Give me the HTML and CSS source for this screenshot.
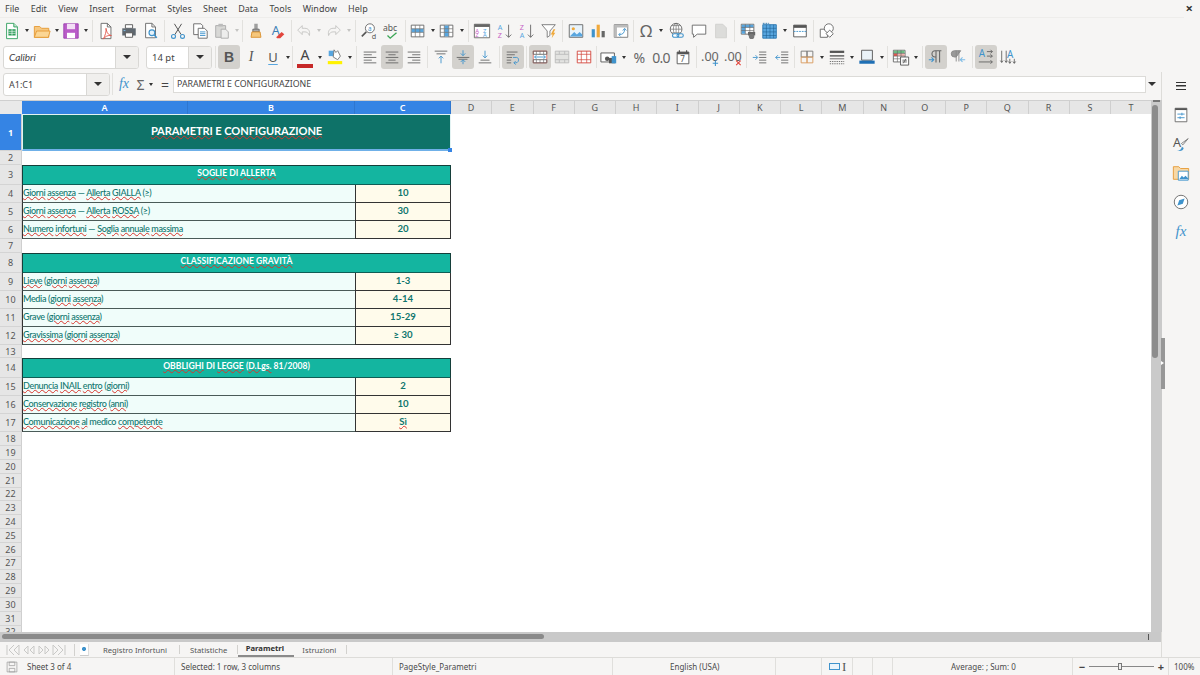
FILE: index.html
```html
<!DOCTYPE html>
<html lang="it">
<head>
<meta charset="utf-8">
<title>Parametri</title>
<link rel="stylesheet" href="styles.css">
</head>
<body>
<svg class="defs" aria-hidden="true">
<symbol id="new" viewBox="0 0 20 20"><path d="M4 1.500h8l4 4v13H4z" fill="#fff" stroke="#2e9e5b"/><path d="M6 8h8v7H6z" fill="#2e9e5b"/><path d="M6 10.300h8M6 12.600h8M10 8v7" stroke="#fff" stroke-width=".7"/><path d="M12 1.500v4h4" fill="#bfe6cc" stroke="#2e9e5b"/></symbol>
<symbol id="open" viewBox="0 0 20 20"><path d="M1.500 5h6l2 2h8v10h-16z" fill="#f6c77f" stroke="#e59a34"/><path d="M1.500 17l2.500-7h15l-2 7z" fill="#fbd694" stroke="#e59a34"/></symbol>
<symbol id="save" viewBox="0 0 20 20"><path d="M2 2h16v16H2z" fill="#b95cc8" stroke="#9c3fb0"/><path d="M5.500 2h9v6h-9z" fill="#f3dff6"/><path d="M5.500 12h9v6h-9z" fill="#fff"/></symbol>
<symbol id="pdf" viewBox="0 0 20 20"><path d="M4.500 1.500h7l4 4v13h-11z" fill="#fff" stroke="#666"/><path d="M11.500 1.500v4h4" fill="none" stroke="#666"/><path d="M10 7c1 5 2 7 6 8-4-.5-7 1-9 4 2-4 3.500-8 3-12z" fill="none" stroke="#e2574c"/></symbol>
<symbol id="print" viewBox="0 0 20 20"><path d="M6 3h8v4H6z" fill="#fff" stroke="#555"/><path d="M2.500 7h15v8h-15z" fill="#5f6870"/><path d="M6 12h8v5H6z" fill="#fff" stroke="#555"/><path d="M4 9.500h2" stroke="#7fc4f0"/></symbol>
<symbol id="preview" viewBox="0 0 20 20"><path d="M4 1.500h7l4 4v12H4z" fill="#fff" stroke="#666"/><path d="M11 1.500v4h4" fill="none" stroke="#666"/><circle cx="11" cy="12" r="3.200" fill="#e6f3fb" stroke="#3f93cc" stroke-width="1.300"/><path d="M13.500 14.500l3 3" stroke="#3f93cc" stroke-width="1.600"/></symbol>
<symbol id="cut" viewBox="0 0 20 20"><path d="M6 2l7.500 12M14 2L6.500 14" stroke="#555" stroke-width="1.100" fill="none"/><circle cx="5" cy="16" r="2.200" fill="none" stroke="#3f93cc" stroke-width="1.200"/><circle cx="15" cy="16" r="2.200" fill="none" stroke="#3f93cc" stroke-width="1.200"/></symbol>
<symbol id="copy" viewBox="0 0 20 20"><path d="M3 2h8l2 2v10H3z" fill="#fff" stroke="#666"/><path d="M8 7h7l3 3v8H8z" fill="#fff" stroke="#666"/><path d="M10 11h6M10 13h6M10 15h6" stroke="#3f93cc"/></symbol>
<symbol id="paste" viewBox="0 0 20 20"><path d="M3 4h11v13H3z" fill="#d8d8d6" stroke="#aaa"/><path d="M6 2h5v3H6z" fill="#bbb"/><path d="M9 8h5l3 3v7H9z" fill="#ededec" stroke="#aaa"/></symbol>
<symbol id="clone" viewBox="0 0 20 20"><path d="M11 2v6M9 2v6" stroke="#777" stroke-width="1.300"/><path d="M6.500 8h7v3h-7z" fill="#aaa" stroke="#666"/><path d="M5.500 11h9l1 6h-11z" fill="#f5c77d" stroke="#d98f2b"/></symbol>
<symbol id="clear" viewBox="0 0 20 20"><text x="3" y="14" class="svgt" font-size="14" fill="#3d7fb5">A</text><path d="M8 17l6-6 3 2.500-4.500 4.500H9z" fill="#e2453c"/></symbol>
<symbol id="undo" viewBox="0 0 20 20"><path d="M3 9l5-5v3h3c4 0 6 3 5 8-1-3-3-4-5-4H8v3z" fill="none" stroke="#c4c4c2" stroke-linejoin="round"/></symbol>
<symbol id="redo" viewBox="0 0 20 20"><path d="M17 9l-5-5v3H9c-4 0-6 3-5 8 1-3 3-4 5-4h3v3z" fill="none" stroke="#c4c4c2" stroke-linejoin="round"/></symbol>
<symbol id="find" viewBox="0 0 20 20"><circle cx="11" cy="7" r="5" fill="#fff" stroke="#666"/><path d="M7 11l-5 5" stroke="#555" stroke-width="1.800"/><text x="9" y="9.500" class="svgt" font-size="7" fill="#3f93cc">a</text><text x="13" y="19" class="svgt" font-size="8" fill="#555">d</text></symbol>
<symbol id="spell" viewBox="0 0 20 20"><text x="0" y="10" class="svgt" font-size="9.500" fill="#555">abc</text><path d="M5 15l3 3 7-6" fill="none" stroke="#3aa655" stroke-width="1.500"/></symbol>
<symbol id="rows" viewBox="0 0 20 20"><path d="M2.500 3.500h14v13h-14z" fill="#fff" stroke="#666"/><path d="M3 7.500h13v4H3z" fill="#58a6df"/><path d="M2.500 7.500h14M2.500 11.500h14M7 3.500v13M12 3.500v13" stroke="#777" stroke-width=".8"/></symbol>
<symbol id="cols" viewBox="0 0 20 20"><path d="M2.500 3.500h14v13h-14z" fill="#fff" stroke="#666"/><path d="M7 4h5v12H7z" fill="#58a6df"/><path d="M2.500 7.500h14M2.500 11.500h14M7 3.500v13M12 3.500v13" stroke="#777" stroke-width=".8"/></symbol>
<symbol id="sort" viewBox="0 0 20 20"><path d="M1.500 2.500h17v15h-17z" fill="#fff" stroke="#666"/><path d="M1.500 2.500h17v3h-17z" fill="#666"/><text x="2.500" y="12" class="svgt" font-size="6.500" fill="#c662c6">A</text><text x="2.500" y="17" class="svgt" font-size="6.500" fill="#c662c6">Z</text><text x="11" y="12" class="svgt" font-size="6.500" fill="#58a6df">Z</text><text x="11" y="17" class="svgt" font-size="6.500" fill="#58a6df">A</text></symbol>
<symbol id="asc" viewBox="0 0 20 20"><text x="2" y="9" class="svgt" font-size="8" fill="#58a6df">A</text><text x="2" y="18" class="svgt" font-size="8" fill="#c662c6">Z</text><path d="M14 3v14M11 14l3 3 3-3" fill="none" stroke="#666"/></symbol>
<symbol id="desc" viewBox="0 0 20 20"><text x="2" y="9" class="svgt" font-size="8" fill="#c662c6">Z</text><text x="2" y="18" class="svgt" font-size="8" fill="#58a6df">A</text><path d="M14 3v14M11 14l3 3 3-3" fill="none" stroke="#666"/></symbol>
<symbol id="filter" viewBox="0 0 20 20"><path d="M2 3h15l-6 7v5l-3 2v-7z" fill="#fff" stroke="#777"/><path d="M15 8l-3 6h2l-1 4 4-6h-2l2-4z" fill="#f0a93b"/></symbol>
<symbol id="image" viewBox="0 0 20 20"><path d="M2.500 3h15v14h-15z" fill="#e8f3fb" stroke="#666"/><circle cx="7" cy="7.500" r="1.800" fill="#f0a93b"/><path d="M3 16l5-5 3 3 3-3 3 3v2H3z" fill="#58a6df"/></symbol>
<symbol id="chart" viewBox="0 0 20 20"><path d="M3 8h3.500v9H3z" fill="#3f93cc"/><path d="M8.500 3H12v14H8.500z" fill="#f0a93b"/><path d="M14 10h3.500v7H14z" fill="#666"/></symbol>
<symbol id="pivot" viewBox="0 0 20 20"><path d="M2.500 3h15v14h-15z" fill="#fff" stroke="#777"/><path d="M2.500 3h15v3h-15zM2.500 3h3v14h-3z" fill="#bbb"/><path d="M8 14c4 0 6-2 6-6M12 9.500L14 7l2 2.500M9.500 12L7.500 14l2 2" fill="none" stroke="#3f93cc"/></symbol>
<symbol id="link" viewBox="0 0 20 20"><circle cx="9" cy="8" r="6.500" fill="#fff" stroke="#666"/><path d="M2.500 8h13M9 1.500v13M4 4h10M4 12h10" stroke="#666" stroke-width=".7"/><ellipse cx="9" cy="8" rx="3" ry="6.500" fill="none" stroke="#666" stroke-width=".7"/><rect x="5" y="13" width="7" height="4" rx="2" fill="#fff" stroke="#3f93cc" stroke-width="1.200"/><rect x="10" y="13" width="7" height="4" rx="2" fill="none" stroke="#3f93cc" stroke-width="1.200"/></symbol>
<symbol id="comment" viewBox="0 0 20 20"><path d="M2.500 3.500h15v10H8l-4 3.500v-3.500H2.500z" fill="#fff" stroke="#666" stroke-linejoin="round"/></symbol>
<symbol id="hdr" viewBox="0 0 20 20"><path d="M4 2.500h8l4 4v11H4z" fill="#dcdcda" stroke="#d0d0ce"/></symbol>
<symbol id="freeze1" viewBox="0 0 20 20"><path d="M2.500 2.500h14v11h-14z" fill="#fff" stroke="#666"/><path d="M3 3h13v3H3zM3 3h4v10H3z" fill="#58a6df"/><path d="M2.500 6h14M2.500 9.500h14M7 2.500v11M12 2.500v11" stroke="#666" stroke-width=".7"/><path d="M10 11h8v4h-8z" fill="#666"/><circle cx="14" cy="16" r="3" fill="#777"/></symbol>
<symbol id="freeze2" viewBox="0 0 20 20"><path d="M2 3h15v15H2z" fill="#58a6df" stroke="#2a77b0"/><path d="M2 7h15M2 11h15M2 15h15M6 3v15M10 3v15M14 3v15" stroke="#1c5d8f" stroke-width=".6"/><path d="M2 1.500h7" stroke="#2a77b0" stroke-dasharray="2 1"/></symbol>
<symbol id="split" viewBox="0 0 20 20"><path d="M3 3.500h14v13H3z" fill="#fff" stroke="#555"/><path d="M3 3.500h14v3H3z" fill="#555"/><path d="M3 10.500h14" stroke="#3f93cc" stroke-dasharray="2 1"/></symbol>
<symbol id="shapes" viewBox="0 0 20 20"><path d="M2.500 8h8v9h-8z" fill="#fff" stroke="#666"/><circle cx="12" cy="7" r="5" fill="#fff" stroke="#666"/><path d="M13 9l4 4-4 4-4-4z" fill="#fff" stroke="#666"/></symbol>
<symbol id="hl" viewBox="0 0 20 20"><path d="M3 3h7v6H3z" fill="#58a6df"/><path d="M8 10l1-8 2 3 2-2 3 6-3 4z" fill="#fff" stroke="#777"/><path d="M2 14.500h16v3.500H2z" fill="#fff200"/></symbol>
<symbol id="al" viewBox="0 0 20 20"><path d="M3 4.500h14M3 7.500h9M3 10.500h14M3 13.500h9M3 16.500h14" stroke="#666"/></symbol>
<symbol id="ac" viewBox="0 0 20 20"><path d="M3 4.500h14M6 7.500h8M3 10.500h14M6 13.500h8M3 16.500h14" stroke="#666"/></symbol>
<symbol id="ar" viewBox="0 0 20 20"><path d="M3 4.500h14M8 7.500h9M3 10.500h14M8 13.500h9M3 16.500h14" stroke="#666"/></symbol>
<symbol id="vt" viewBox="0 0 20 20"><path d="M3 3.500h14M5 6.500h10" stroke="#666"/><path d="M10 17V9M7.500 11.500L10 9l2.500 2.500" fill="none" stroke="#3f93cc"/></symbol>
<symbol id="vm" viewBox="0 0 20 20"><path d="M3 10.500h14M5 12.500h10" stroke="#666"/><path d="M10 2.500v6M7.500 6L10 8.500 12.500 6M10 18v-5M7.500 15.500L10 13l2.500 2.500" fill="none" stroke="#3f93cc"/></symbol>
<symbol id="vb" viewBox="0 0 20 20"><path d="M3 16.500h14M5 13.500h10" stroke="#666"/><path d="M10 3v8M7.500 8.500L10 11l2.500-2.500" fill="none" stroke="#3f93cc"/></symbol>
<symbol id="wrap" viewBox="0 0 20 20"><path d="M3 4.500h12M3 7.500h9M3 10.500h6M3 13.500h5M3 16.500h5" stroke="#666"/><path d="M10 10.500h4c3 0 3 6-1 6h-2M13 14.500l-2 2 2 2" fill="none" stroke="#3f93cc"/></symbol>
<symbol id="merge" viewBox="0 0 20 20"><path d="M2.500 3.500h15v13h-15z" fill="#fff" stroke="#e2574c" stroke-width=".8"/><path d="M2.500 3.500h15v3.500h-15zM2.500 13h15v3.500h-15z" fill="none" stroke="#666"/><path d="M10 3.500V7M10 13v3.500M6 3.500V7M14 3.500V7M6 13v3.500M14 13v3.500" stroke="#666" stroke-width=".7"/><path d="M4 10h12M6 8l-2 2 2 2M14 8l2 2-2 2" fill="none" stroke="#3f93cc"/></symbol>
<symbol id="merge2" viewBox="0 0 20 20"><path d="M2.500 3.500h15v13h-15z" fill="#e3e3e1" stroke="#bbb"/><path d="M2.500 7h15M2.500 13h15M7 3.500V7M13 3.500V7M7 13v3.500M13 13v3.500" stroke="#bbb"/></symbol>
<symbol id="unmerge" viewBox="0 0 20 20"><path d="M2.500 3.500h15v13h-15z" fill="#fff" stroke="#d2453c"/><path d="M2.500 7h15M2.500 13h15M7 3.500v13M13 3.500v13" stroke="#d2453c" stroke-width=".8"/></symbol>
<symbol id="cur" viewBox="0 0 20 20"><path d="M1 5.500h15v10H1z" fill="#fff" stroke="#555"/><circle cx="8" cy="12" r="2.500" fill="#555"/><path d="M10 11h7v6h-7z" fill="#555"/><path d="M13 9h5v8h-5z" fill="#3f93cc"/></symbol>
<symbol id="date" viewBox="0 0 20 20"><path d="M3.500 4.500h13v13h-13z" fill="#fff" stroke="#555"/><path d="M3.500 4.500h13v2.500h-13z" fill="#555"/><path d="M6 2.500v3M14 2.500v3" stroke="#555" stroke-width="1.300"/><text x="7" y="15.500" class="svgt" font-size="9" fill="#555">7</text></symbol>
<symbol id="adddec" viewBox="0 0 20 20"><text x="0" y="14" class="svgt" font-size="14" fill="#666">.00</text><path d="M16 14v6M13 17h6" stroke="#3f93cc" stroke-width="1.200"/></symbol>
<symbol id="deldec" viewBox="0 0 20 20"><text x="0" y="14" class="svgt" font-size="14" fill="#666">.00</text><path d="M13.500 14l5 5M18.500 14l-5 5" stroke="#e2453c" stroke-width="1.200"/></symbol>
<symbol id="ind" viewBox="0 0 20 20"><path d="M9 4.500h8M9 7.500h8M9 10.500h8M9 13.500h8M9 16.500h8" stroke="#666"/><path d="M2 10.500h5M5 8l2.500 2.500L5 13" fill="none" stroke="#3f93cc"/></symbol>
<symbol id="outd" viewBox="0 0 20 20"><path d="M9 4.500h8M9 7.500h8M9 10.500h8M9 13.500h8M9 16.500h8" stroke="#666"/><path d="M8 10.500H3M5.500 8L3 10.500 5.500 13" fill="none" stroke="#3f93cc"/></symbol>
<symbol id="bord" viewBox="0 0 20 20"><path d="M3.500 3.500H10V10H3.500zM10 3.500h6.500V10H10z" fill="none" stroke="#777"/><path d="M3.500 10H10v6.500H3.500zM10 10h6.500v6.500H10z" fill="none" stroke="#d99a5b"/></symbol>
<symbol id="bstyle" viewBox="0 0 20 20"><path d="M2 3h16v2.500H2z" fill="#555"/><path d="M2 8h16v1.500H2z" fill="#555"/><path d="M2 12h16" stroke="#666"/><path d="M2 15h16M2 17.500h16" stroke="#666" stroke-dasharray="1.500 1"/></symbol>
<symbol id="bcolor" viewBox="0 0 20 20"><path d="M4 2.500h12v11H4z" fill="#eaf2f8" stroke="#555"/><path d="M1.500 14h17v3.500h-17z" fill="#1f6fb5"/></symbol>
<symbol id="cond" viewBox="0 0 20 20"><path d="M1.500 2.500h13v13h-13z" fill="#fff" stroke="#666"/><path d="M2 3h12v3H2z" fill="#6cbf84"/><path d="M2 6h4v3H2z" fill="#e2574c"/><path d="M6 6h8v3H6z" fill="#f3b3ad"/><path d="M1.500 6h13M1.500 9h13M1.500 12h13M6 2.500v13M10 2.500v13" stroke="#666" stroke-width=".7"/><path d="M9.500 10h9v9h-9z" fill="#fff" stroke="#555"/><path d="M11.500 13.500h5M11.500 15.500h5M15.500 12l-3 5" stroke="#555" stroke-width=".9"/></symbol>
<symbol id="ltr" viewBox="0 0 20 20"><path d="M10 16V3M14 16V3M16 3H9a3.500 3.500 0 0 0 0 7h1" fill="none" stroke="#666" stroke-width="1.200"/><path d="M2 13h5M5 10.500l2.500 2.500L5 15.500" fill="none" stroke="#3f93cc" stroke-width="1.200"/></symbol>
<symbol id="rtl" viewBox="0 0 20 20"><path d="M8 15V3M11 15V3M13 3H6a3.500 3.500 0 0 0 0 7h2z" fill="#999" stroke="#888"/><path d="M18 13h-5M15 10.500L12.500 13l2.500 2.500" fill="none" stroke="#7fbce6" stroke-width="1.200"/></symbol>
<symbol id="ltxt" viewBox="0 0 20 20"><text x="2" y="10.500" class="svgt" font-size="11" fill="#3f93cc">A</text><path d="M11 4h6M15 2l2 2-2 2M11 9h6M15 7l2 2-2 2M2 15.500h15M15 13.500l2 2-2 2" fill="none" stroke="#555" stroke-width=".9"/></symbol>
<symbol id="vtxt" viewBox="0 0 20 20"><text x="9" y="11" class="svgt" font-size="11" fill="#3f93cc">A</text><path d="M3 3v13M1.500 14l1.500 2 1.500-2M8 3v13M6.500 14L8 16l1.500-2M12 12v5M10.500 15l1.500 2 1.500-2M17 12v5M15.500 15l1.500 2 1.500-2" fill="none" stroke="#555" stroke-width=".9"/></symbol>
<symbol id="props" viewBox="0 0 20 20"><path d="M3.500 2.500h13v15h-13z" fill="#fff" stroke="#666"/><path d="M3.500 2.500h13v2h-13z" fill="#555"/><path d="M6 9h8M6 13h8" stroke="#3f93cc"/><path d="M11 7.500v3M9 11.500v3" stroke="#3f93cc"/></symbol>
<symbol id="styles" viewBox="0 0 20 20"><text x="1" y="13" class="svgt" font-size="14" fill="#555">A</text><path d="M18 4l-6 7-1.500-1.500z" fill="#fff" stroke="#777"/><path d="M5.500 17c3 .5 5-1 5.500-4l2 1.500c-.5 3-4 4-7.500 2.500z" fill="#3f93cc"/></symbol>
<symbol id="gallery" viewBox="0 0 20 20"><path d="M1.500 3h6l2 2h9v12h-17z" fill="#f8d8a5" stroke="#e59a34"/><path d="M7 8h11v10H7z" fill="#fff" stroke="#3f93cc"/><path d="M8 17l3-4 2 2 2-2 3 3v1z" fill="#3f93cc"/></symbol>
<symbol id="nav" viewBox="0 0 20 20"><circle cx="10" cy="10" r="7.500" fill="#fff" stroke="#666"/><path d="M14 6l-2 6-6 2 2-6z" fill="#3f93cc"/></symbol>
<symbol id="sfile" viewBox="0 0 20 20"><path d="M3 3h14v14H3z" fill="#f6f5f4" stroke="#999"/><path d="M6 3h8v5H6zM6 12h8v5H6z" fill="none" stroke="#999"/></symbol>
</svg>

<div class="app">
  <nav class="menubar">
    <span>File</span><span>Edit</span><span>View</span><span>Insert</span><span>Format</span><span>Styles</span><span>Sheet</span><span>Data</span><span>Tools</span><span>Window</span><span>Help</span>
    <b class="close">×</b>
  </nav>

  <div class="tb tb1">
    <i class="b"><svg><use href="#new"/></svg></i><i class="a"></i>
    <i class="b"><svg><use href="#open"/></svg></i><i class="a n"></i>
    <i class="b"><svg><use href="#save"/></svg></i><i class="a"></i><i class="s"></i>
    <i class="b"><svg><use href="#pdf"/></svg></i>
    <i class="b g1"><svg><use href="#print"/></svg></i>
    <i class="b"><svg><use href="#preview"/></svg></i><i class="s"></i>
    <i class="b"><svg><use href="#cut"/></svg></i>
    <i class="b"><svg><use href="#copy"/></svg></i>
    <i class="b"><svg><use href="#paste"/></svg></i><i class="a n off"></i><i class="s"></i>
    <i class="b"><svg><use href="#clone"/></svg></i>
    <i class="b"><svg><use href="#clear"/></svg></i><i class="s n"></i>
    <i class="b"><svg><use href="#undo"/></svg></i><i class="a off"></i>
    <i class="b"><svg><use href="#redo"/></svg></i><i class="a n off"></i><i class="s w"></i>
    <i class="b"><svg><use href="#find"/></svg></i>
    <i class="b g1"><svg><use href="#spell"/></svg></i><i class="s n"></i>
    <i class="b"><svg><use href="#rows"/></svg></i><i class="a n"></i>
    <i class="b"><svg><use href="#cols"/></svg></i><i class="a n"></i><i class="s w"></i>
    <i class="b"><svg><use href="#sort"/></svg></i>
    <i class="b g1"><svg><use href="#asc"/></svg></i>
    <i class="b"><svg><use href="#desc"/></svg></i>
    <i class="b"><svg><use href="#filter"/></svg></i><i class="s"></i>
    <i class="b"><svg><use href="#image"/></svg></i>
    <i class="b"><svg><use href="#chart"/></svg></i>
    <i class="b g1"><svg><use href="#pivot"/></svg></i><i class="s t"></i>
    <i class="b om">Ω</i><i class="a"></i>
    <i class="b g1"><svg><use href="#link"/></svg></i>
    <i class="b"><svg><use href="#comment"/></svg></i>
    <i class="b"><svg><use href="#hdr"/></svg></i><i class="s"></i>
    <i class="b"><svg><use href="#freeze1"/></svg></i>
    <i class="b"><svg><use href="#freeze2"/></svg></i><i class="a n"></i>
    <i class="b g1"><svg><use href="#split"/></svg></i><i class="s"></i>
    <i class="b"><svg><use href="#shapes"/></svg></i>
  </div>

  <div class="tb tb2">
    <div class="combo fname"><span class="ci">Calibri</span><span class="cb"></span></div>
    <div class="combo fsize"><span>14 pt</span><span class="cb"></span></div>
    <i class="s w"></i>
    <i class="b on tx tb-b">B</i>
    <i class="b tx tb-i">I</i>
    <i class="b tx tb-u">U</i><i class="a n"></i><i class="s t"></i>
    <i class="b tx fcolor">A</i><i class="a"></i>
    <i class="b"><svg><use href="#hl"/></svg></i><i class="a"></i><i class="s"></i>
    <i class="b"><svg><use href="#al"/></svg></i>
    <i class="b on"><svg><use href="#ac"/></svg></i>
    <i class="b"><svg><use href="#ar"/></svg></i><i class="s"></i>
    <i class="b"><svg><use href="#vt"/></svg></i>
    <i class="b on"><svg><use href="#vm"/></svg></i>
    <i class="b"><svg><use href="#vb"/></svg></i><i class="s w"></i>
    <i class="b on"><svg><use href="#wrap"/></svg></i><i class="s"></i>
    <i class="b on"><svg><use href="#merge"/></svg></i>
    <i class="b"><svg><use href="#merge2"/></svg></i>
    <i class="b"><svg><use href="#unmerge"/></svg></i><i class="s t"></i>
    <i class="b"><svg><use href="#cur"/></svg></i><i class="a"></i>
    <i class="b tx pct">%</i>
    <i class="b tx pct">0.0</i>
    <i class="b"><svg><use href="#date"/></svg></i><i class="s"></i>
    <i class="b"><svg><use href="#adddec"/></svg></i>
    <i class="b g1"><svg><use href="#deldec"/></svg></i><i class="s"></i>
    <i class="b"><svg><use href="#ind"/></svg></i>
    <i class="b"><svg><use href="#outd"/></svg></i><i class="s t"></i>
    <i class="b"><svg><use href="#bord"/></svg></i><i class="a"></i>
    <i class="b"><svg><use href="#bstyle"/></svg></i><i class="a"></i>
    <i class="b"><svg><use href="#bcolor"/></svg></i><i class="a n"></i><i class="s"></i>
    <i class="b"><svg><use href="#cond"/></svg></i><i class="a"></i><i class="s"></i>
    <i class="b on"><svg><use href="#ltr"/></svg></i>
    <i class="b"><svg><use href="#rtl"/></svg></i><i class="s w"></i>
    <i class="b on"><svg><use href="#ltxt"/></svg></i>
    <i class="b"><svg><use href="#vtxt"/></svg></i>
  </div>

  <div class="work">
    <div class="left">
      <div class="formula">
        <div class="combo namebox"><span>A1:C1</span><span class="cb"></span></div>
        <i class="s fs"></i>
        <span class="fx">fx</span>
        <span class="sigma">Σ</span><i class="a n"></i>
        <span class="eq">=</span>
        <div class="input">PARAMETRI E CONFIGURAZIONE</div>
        <i class="a fa"></i>
      </div>

      <div class="sheetwrap">
        <div class="sheet">
          <div class="colhead">
            <span class="corner"></span>
            <span class="ch sel ca">A</span><span class="ch sel cb2">B</span><span class="ch sel cc">C</span>
            <span class="ch">D</span><span class="ch">E</span><span class="ch">F</span><span class="ch">G</span><span class="ch">H</span><span class="ch">I</span><span class="ch">J</span><span class="ch">K</span><span class="ch">L</span><span class="ch">M</span><span class="ch">N</span><span class="ch">O</span><span class="ch">P</span><span class="ch">Q</span><span class="ch">R</span><span class="ch">S</span><span class="ch">T</span>
          </div>

          <div class="r title"><span class="rh sel">1</span><div class="t-cell"><span class="sp">PARAMETRI</span> E <span class="sp">CONFIGURAZIONE</span><span class="handle"></span></div></div>
          <div class="r"><span class="rh">2</span></div>
          <div class="r sec"><span class="rh">3</span><div class="s-cell"><span class="sp">SOGLIE</span> DI <span class="sp">ALLERTA</span></div></div>
          <div class="r data"><span class="rh">4</span><div class="lab"><span class="sp">Giorni</span> <span class="sp">assenza</span> — <span class="sp">Allerta</span> <span class="sp">GIALLA</span> (≥)</div><div class="val">10</div></div>
          <div class="r data"><span class="rh">5</span><div class="lab"><span class="sp">Giorni</span> <span class="sp">assenza</span> — <span class="sp">Allerta</span> <span class="sp">ROSSA</span> (≥)</div><div class="val">30</div></div>
          <div class="r data"><span class="rh">6</span><div class="lab"><span class="sp">Numero</span> <span class="sp">infortuni</span> — <span class="sp">Soglia</span> <span class="sp">annuale</span> <span class="sp">massima</span></div><div class="val">20</div></div>
          <div class="r"><span class="rh">7</span></div>
          <div class="r sec"><span class="rh">8</span><div class="s-cell"><span class="sp">CLASSIFICAZIONE</span> <span class="sp">GRAVITÀ</span></div></div>
          <div class="r data"><span class="rh">9</span><div class="lab"><span class="sp">Lieve</span> (<span class="sp">giorni</span> <span class="sp">assenza</span>)</div><div class="val">1-3</div></div>
          <div class="r data"><span class="rh">10</span><div class="lab">Media (<span class="sp">giorni</span> <span class="sp">assenza</span>)</div><div class="val">4-14</div></div>
          <div class="r data"><span class="rh">11</span><div class="lab">Grave (<span class="sp">giorni</span> <span class="sp">assenza</span>)</div><div class="val">15-29</div></div>
          <div class="r data"><span class="rh">12</span><div class="lab"><span class="sp">Gravissima</span> (<span class="sp">giorni</span> <span class="sp">assenza</span>)</div><div class="val">≥ 30</div></div>
          <div class="r"><span class="rh">13</span></div>
          <div class="r sec"><span class="rh">14</span><div class="s-cell"><span class="sp">OBBLIGHI</span> DI <span class="sp">LEGGE</span> (<span class="sp">D.Lgs.</span> 81/2008)</div></div>
          <div class="r data"><span class="rh">15</span><div class="lab"><span class="sp">Denuncia</span> <span class="sp">INAIL</span> <span class="sp">entro</span> (<span class="sp">giorni</span>)</div><div class="val">2</div></div>
          <div class="r data"><span class="rh">16</span><div class="lab"><span class="sp">Conservazione</span> <span class="sp">registro</span> (<span class="sp">anni</span>)</div><div class="val">10</div></div>
          <div class="r data"><span class="rh">17</span><div class="lab"><span class="sp">Comunicazione</span> <span class="sp">al</span> medico <span class="sp">competente</span></div><div class="val"><span class="sp">Sì</span></div></div>
          <div class="r"><span class="rh">18</span></div><div class="r"><span class="rh">19</span></div><div class="r"><span class="rh">20</span></div><div class="r"><span class="rh">21</span></div><div class="r"><span class="rh">22</span></div><div class="r"><span class="rh">23</span></div><div class="r"><span class="rh">24</span></div><div class="r"><span class="rh">25</span></div><div class="r"><span class="rh">26</span></div><div class="r"><span class="rh">27</span></div><div class="r"><span class="rh">28</span></div><div class="r"><span class="rh">29</span></div><div class="r"><span class="rh">30</span></div><div class="r"><span class="rh">31</span></div><div class="r"><span class="rh">32</span></div>
        </div>
        <div class="vscroll"><div class="vcap"></div><div class="vthumb"></div></div>
      </div>

      <div class="hscroll"><div class="hthumb"></div><span class="htick"></span></div>

      <div class="tabs">
        <div class="tnav">
          <svg viewBox="0 0 62 14"><path d="M2 2v10M9 2L4 7l5 5M14 2L9 7l5 5zM23 3l-4 4 4 4zM29 3l-4 4 4 4zM34 3l4 4-4 4zM40 3l4 4-4 4zM48 2l5 5-5 5zM53 2l5 5-5 5M60 2v10" fill="none" stroke="#c9c9c7"/></svg>
        </div>
        <i class="tsep first"></i>
        <span class="addsheet"></span>
        <span class="tab">Registro Infortuni</span><i class="tsep"></i>
        <span class="tab st">Statistiche</span><i class="tsep"></i>
        <span class="tab cur">Parametri</span>
        <span class="tab is">Istruzioni</span><i class="tsep"></i>
      </div>
    </div>

    <aside class="sidebar">
      <span class="burger"></span>
      <svg class="si"><use href="#props"/></svg>
      <svg class="si"><use href="#styles"/></svg>
      <svg class="si"><use href="#gallery"/></svg>
      <svg class="si"><use href="#nav"/></svg>
      <span class="si sfx">fx</span>
      <span class="sgrip"></span>
    </aside>
  </div>

  <footer class="status">
    <div class="c c1"><svg class="sv"><use href="#sfile"/></svg><span>Sheet 3 of 4</span></div>
    <div class="c c2">Selected: 1 row, 3 columns</div>
    <div class="c c3">PageStyle_Parametri</div>
    <div class="c c4">English (USA)</div>
    <div class="c c5"></div>
    <div class="c c6"><span class="ins"></span><span class="cur-i">I</span></div>
    <div class="c c7"></div>
    <div class="c c8"></div>
    <div class="c c9">Average: ; Sum: 0</div>
    <div class="c c10"><b>−</b><span class="slider"><span class="knob"></span></span><b>+</b></div>
    <div class="c c11">100%</div>
  </footer>
</div>
</body>
</html>
```
FILE: styles.css
```css
* { box-sizing: border-box; }
html, body { margin: 0; padding: 0; }
body { width: 1200px; height: 675px; overflow: hidden; background: #f6f5f4; font-family: "Noto Sans", sans-serif; color: #3d3d3d; }
.defs { display: none; }
.svgt { font-family: "Noto Sans", sans-serif; }
.app { width: 1200px; height: 675px; display: flex; flex-direction: column; }

/* menu */
.menubar { height: 17px; flex: none; display: flex; align-items: center; padding-left: 5px; gap: 11.3px; font-size: 9px; color: #444; }
.close { margin-left: auto; margin-right: 7px; font-size: 13px; line-height: 1; color: #333; }

/* toolbars */
.tb { display: flex; align-items: center; flex: none; }
.tb1 { height: 27px; padding-left: 1px; padding-bottom: 1px; border-top: 1px solid #eeedeb; margin-right: 16px; }
.tb2 { height: 28px; padding-left: 3px; padding-bottom: 2px; }
.b { width: 22px; height: 24px; flex: none; display: flex; align-items: center; justify-content: center; font-style: normal; border-radius: 3px; }
.b svg { width: 18px; height: 18px; display: block; }
.g1 { margin-left: 1px; }
.on { background: #d3d1cd; }
.a { width: 8px; height: 10px; flex: none; position: relative; display: flex; align-items: center; justify-content: center; }
.a::after { content: ""; border-left: 2.5px solid transparent; border-right: 2.5px solid transparent; border-top: 3px solid #333; }
.a.n { width: 7px; }
.a.off::after { border-top-color: #c4c4c2; }
.s { width: 5px; height: 22px; flex: none; display: flex; justify-content: center; }
.s::after { content: ""; width: 1px; background: #e2e1de; }
.s.n { width: 4px; }
.s.w { width: 6px; }
.s.t { width: 3px; }
.om { font-size: 17px; color: #666; }
.tx { color: #555; }
.tb-b { font-weight: 700; font-size: 14px; font-family: "Liberation Sans", sans-serif; }
.tb-i { font-style: italic; font-size: 14px; font-family: "Liberation Serif", serif; }
.tb-u { font-size: 13px; text-decoration: underline; text-decoration-color: #58a6df; text-underline-offset: 2px; }
.fcolor { font-size: 14px; line-height: 14px; align-items: flex-start; padding-top: 3px; color: #444; background: linear-gradient(#c62828, #c62828) no-repeat 50% 19px / 16px 4px; }
.pct { font-size: 14px; color: #666; letter-spacing: -.8px; }

.combo { display: flex; align-items: center; height: 23px; background: #fff; border: 1px solid #d9d8d5; border-radius: 3px; font-size: 9.5px; padding-left: 5px; flex: none; color: #444; overflow: hidden; }
.combo > span:first-child { flex: 1; }
.cb { width: 23px; height: 100%; background: #f0efed; border-left: 1px solid #d9d8d5; flex: none; display: flex; align-items: center; justify-content: center; }
.cb::after { content: ""; border-left: 4px solid transparent; border-right: 4px solid transparent; border-top: 4px solid #333; }
.fname { width: 136px; margin-right: 7px; }
.ci { font-style: italic; font-family: Lato, sans-serif; font-size: 10px; }
.fsize { width: 66px; }

/* work area */
.work { flex: 1; display: flex; min-height: 0; }
.left { width: 1162px; display: flex; flex-direction: column; border-right: 1px solid #dddcd9; }
.formula { height: 28px; flex: none; display: flex; align-items: center; padding-left: 3px; padding-bottom: 4px; }
.namebox { width: 107px; height: 23px; }
.namebox > span:first-child { font-size: 9px; }
.fs { width: 4px; }
.fx { width: 19px; margin-left: .5px; text-align: center; font-family: "Liberation Serif", serif; font-style: italic; font-size: 14px; color: #3f93cc; }
.sigma { width: 14px; text-align: center; font-size: 14px; color: #666; }
.eq { width: 16px; margin-left: 2.5px; text-align: center; font-size: 14px; color: #444; }
.input { width: 973px; height: 17px; background: #fff; border: 1px solid #dcdbd8; padding-left: 3px; font-size: 8.8px; line-height: 15px; color: #444; }
.fa { width: 12px; }
.fa::after { border-left-width: 4px; border-right-width: 4px; border-top-width: 4px; }

.sheetwrap { flex: 1; display: flex; min-height: 0; background: #fff; }
.sheet { width: 1151px; flex: none; overflow: hidden; font-family: Lato, sans-serif; }
.colhead { height: 14px; display: flex; background: #e6e6e6; border-top: 1px solid #cfcfcf; }
.corner { width: 22px; flex: none; background: #e9e9e9; }
.ch { width: 41.25px; flex: none; text-align: center; font-size: 9px; line-height: 13px; color: #555; border-right: 1px solid #cfcfcf; font-family: "Noto Sans", sans-serif; }
.ch.sel { background: #3584e4; color: #fff; font-weight: 600; border-right-color: #2f77d0; }
.ca { width: 166px; }
.cb2 { width: 167px; }
.cc { width: 96px; }

.r { height: 13.8px; display: flex; position: relative; }
.rh { width: 22px; flex: none; background: #e6e6e6; border-right: 1px solid #cfcfcf; border-bottom: 1px solid #d4d4d4; display: flex; align-items: center; justify-content: center; font-size: 9px; color: #555; font-family: "Noto Sans", sans-serif; }
.rh.sel { background: #3584e4; color: #fff; font-weight: 700; }
.title { height: 37px; }
.sec { height: 20px; }
.data { height: 18px; }
.t-cell { width: 429px; position: relative; background: #0e7268; color: #fff; font-weight: 700; font-size: 11.1px; line-height: 32px; text-align: center; white-space: nowrap; border: 1px solid #e3f3f3; border-bottom: 2px solid #6fb0e8; letter-spacing: -.1px; }
.handle { position: absolute; right: -2px; bottom: -3px; width: 4px; height: 4px; background: #3584e4; }
.s-cell { width: 429px; background: #14b5a0; color: #fff; font-weight: 700; font-size: 8.6px; line-height: 15px; text-align: center; white-space: nowrap; border: 1px solid #143f3a; border-bottom: 1px solid #0f5d55; }
.lab { width: 333px; background: #f0fdfa; color: #0f766e; font-size: 9px; letter-spacing: -.33px; font-weight: 500; border-bottom: 1px solid #4a5b58; border-left: 1px solid #333; line-height: 15px; white-space: nowrap; }
.val { width: 96px; background: #fffbeb; color: #0f766e; font-size: 9.6px; font-weight: 700; border: 1px solid #333; border-width: 0 1px 1px 1px; line-height: 15px; text-align: center; }
.sp { text-decoration: underline wavy #d8342b; text-decoration-thickness: .8px; text-underline-offset: 0; }

.vscroll { width: 11px; flex: none; background: #cacaca; position: relative; }
.vcap { height: 5px; border-top: 2px solid #777; margin: 0 2px; }
.vthumb { width: 6px; height: 253px; margin-left: 1px; background: #8c8c8c; border-radius: 3px; }

.hscroll { height: 10px; flex: none; background: #c9c9c9; padding: 2px 0 2px 2px; position: relative; }
.hthumb { width: 542px; height: 5px; background: #8a8a8a; border-radius: 3px; }
.htick { position: absolute; left: 1148px; top: 2px; width: 1px; height: 6px; background: #555; }

.tabs { height: 15px; flex: none; display: flex; align-items: center; font-size: 7.7px; color: #555; }
.tnav { width: 62px; margin-left: 5px; height: 14px; }
.tnav svg { width: 62px; height: 14px; display: block; }
.tsep { width: 1px; height: 9px; background: #d2d1ce; flex: none; }
.tsep.first { margin-left: 7px; height: 12px; }
.addsheet { width: 9px; height: 12px; margin-left: 5px; background: radial-gradient(circle at 50% 45%, #3f93cc 0 1.8px, #fff 2.3px); border-right: 1px solid #ddd; border-bottom: 1px solid #ccc; }
.tab { flex: none; margin-left: 14px; margin-right: 12px; }
.tab.st { margin-left: 10px; margin-right: 10px; }
.tab.cur { width: 56px; height: 15px; margin: 0; padding-right: 3px; text-align: center; font-weight: 700; color: #333; border-bottom: 2px solid #8a8a8a; line-height: 13px; }
.tab.is { margin-left: 8px; margin-right: 10px; }

/* sidebar */
.sidebar { position: relative; flex: 1; display: flex; flex-direction: column; align-items: center; padding-top: 9px; }
.burger { width: 10px; height: 8px; border-top: 1.5px solid #333; border-bottom: 1.5px solid #333; background: linear-gradient(#333, #333) no-repeat 0 50% / 100% 1.5px; margin-bottom: 16px; margin-top: 1px; }
.si { width: 18px; height: 18px; margin-bottom: 11px; display: block; flex: none; }
.sfx { font-family: "Liberation Serif", serif; font-style: italic; font-size: 15px; color: #3f93cc; text-align: center; line-height: 18px; }
.sgrip { position: absolute; left: -1px; top: 266px; width: 4px; height: 51px; background: #979797; }
.sgrip::after { content: ""; position: absolute; left: 0; top: 23px; border-left: 3px solid #fff; border-top: 2px solid transparent; border-bottom: 2px solid transparent; }

/* status */
.status { height: 18px; flex: none; display: flex; align-items: center; font-size: 8px; border-top: 1px solid #dddcd9; color: #4a4a4a; }
.c { height: 100%; display: flex; align-items: center; flex: none; border-right: 1px solid #e0dfdc; white-space: nowrap; padding-left: 6px; }
.c1 { width: 175px; gap: 8px; padding-left: 5px; }
.sv { width: 14px; height: 14px; }
.c2 { width: 218px; }
.c3 { width: 220px; }
.c4 { width: 163px; padding-left: 57px; }
.c5 { width: 46px; }
.c6 { width: 31px; gap: 2px; padding-left: 7px; }
.ins { width: 11px; height: 7px; background: #eaf4fb; border: 1px solid #3f93cc; }
.cur-i { font-family: "Liberation Serif", serif; font-size: 13px; line-height: 12px; color: #555; }
.c7 { width: 20px; }
.c8 { width: 20px; }
.c9 { width: 180px; padding-left: 58px; }
.c10 { width: 96px; padding-left: 5px; gap: 3px; }
.c10 b { font-weight: 700; font-size: 11px; color: #444; width: 8px; text-align: center; }
.slider { width: 65px; height: 1px; background: #888; position: relative; }
.knob { position: absolute; left: 29px; top: -3px; width: 4px; height: 7px; border: 1px solid #777; background: #eee; }
.c11 { border: 0; padding-left: 5px; }
```
